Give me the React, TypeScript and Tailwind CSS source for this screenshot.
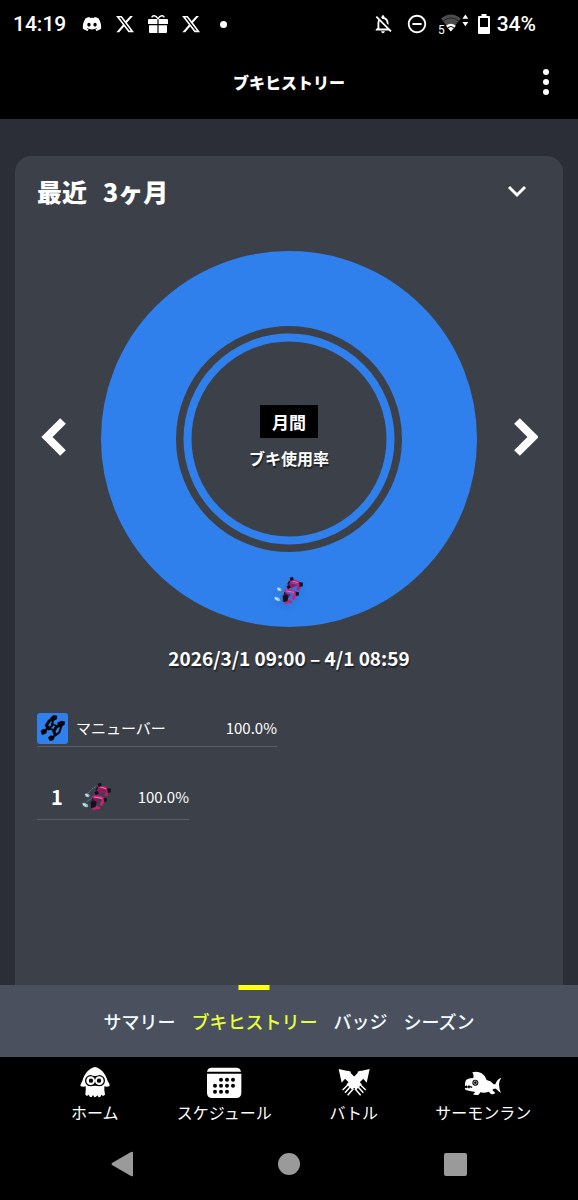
import type { ReactNode } from 'react';
import { FaDiscord, FaXTwitter } from 'react-icons/fa6';
import { MdOutlineNotificationsOff, MdRemoveCircleOutline } from 'react-icons/md';

function GiftIcon() {
  return (
    <svg viewBox="0 0 20 18" className="h-[18px] w-5" fill="currentColor" aria-hidden="true">
      <path d="M1 4h8.400v5H0V5a1 1 0 0 1 1-1zM10.600 4H19a1 1 0 0 1 1 1v4h-9.400zM1 10.200h8.400V18H2a1 1 0 0 1-1-1zM10.600 10.200H19V17a1 1 0 0 1-1 1h-7.400z" />
      <path d="M10 4C8 0 4 0 4 2.500M10 4c2-4 6-4 6-1.500" fill="none" stroke="currentColor" strokeWidth="1.500" />
    </svg>
  );
}

function WifiIcon() {
  return (
    <span className="flex items-end">
      <span className="-mr-1 text-xs leading-3 font-normal">5</span>
      <svg viewBox="0 0 82 60" className="mb-[3px] h-5 w-[27px] overflow-visible" aria-hidden="true">
        <path d="M0 16Q30-8 60 16L30 54Z" fill="#4b4b4b" />
        <path d="M7 24Q30 5 53 24" stroke="#222" strokeWidth="3" fill="none" />
        <path d="M15 38Q30 26 45 38L30 56Z" fill="#fff" />
        <path d="M21 44Q30 37 39 44" stroke="#000" strokeWidth="3" fill="none" />
        <path d="M65 17l9-13 9 13zM65 27l9 13 9-13z" fill="#fff" />
      </svg>
    </span>
  );
}

function BatteryIcon() {
  return (
    <svg viewBox="0 0 12 20" className="h-5 w-3" aria-hidden="true">
      <path d="M3.500 0h5v2H11a1 1 0 0 1 1 1v16a1 1 0 0 1-1 1H1a1 1 0 0 1-1-1V3a1 1 0 0 1 1-1h2.500zM2 4v9h8V4z" fill="#fff" fillRule="evenodd" />
    </svg>
  );
}

function DualiesSprite({ className }: { className: string }) {
  return (
    <svg viewBox="27 27 96 96" className={className} fill="none" aria-hidden="true">
      <path d="M45 70Q56 50 72 44M38 97Q46 84 62 79" stroke="#5b8fae" strokeWidth="3" strokeDasharray="5 3" />
      <path d="M38 66l7-2 8 5-2 7-9-1zM31 93l6-1 10 5 2 8-9 1-8-6z" fill="#8ec0ca" />
      <path d="M33 96l9 5M41 68l7 3" stroke="#e5fafa" strokeWidth="3" />
      <path d="M77 46Q93 43 108 54L101 72" stroke="#c3186f" strokeWidth="9" />
      <path d="M72 53L92 58 79 64" stroke="#9c1460" strokeWidth="7" />
      <path d="M82 44l20 6" stroke="#ff98bd" strokeWidth="2" />
      <path d="M62 76Q78 70 97 82L86 100" stroke="#d31c79" strokeWidth="9" />
      <path d="M62 84L79 88" stroke="#8b1456" strokeWidth="7" />
      <path d="M67 75l23 4" stroke="#ff9bc2" strokeWidth="2" />
      <path d="M62 112l13-6 8 4" stroke="#cf1f74" strokeWidth="8" />
      <path d="M77 35l10-3 2 10-9 3zM106 48l11 2-1 11-9 2zM67 61l9-5 5 8-9 6zM95 77l9 1 1 10-9 2zM56 89l10-4 8 6-4 15-13 2z" fill="#10111c" />
      <path d="M72 55l5-10M62 91V79" stroke="#29172a" strokeWidth="5" />
    </svg>
  );
}

function DualiesGlyph() {
  return (
    <svg viewBox="22 39 92 92" className="size-[31px] shrink-0" aria-hidden="true">
      <rect x="22" y="39" width="92" height="92" rx="9" fill="#2f80ed" />
      <g stroke="#05070b" strokeLinecap="round">
        <path d="M72 54L58 63 50 76 57 86" strokeWidth="9" fill="none" />
        <path d="M70 58L66 78 42 92" strokeWidth="6" fill="none" />
        <path d="M64 53l8-6 8 2-1 7-7 4-7-1zM35 93l6-5 9 4-3 7-9 3z" fill="#05070b" strokeWidth="4" />
        <path d="M94 74L80 80 72 93 76 103" strokeWidth="9" fill="none" />
        <path d="M95 76L88 97 66 112" strokeWidth="6" fill="none" />
        <path d="M85 69l9-5 9 2-1 7-8 5-8-1zM57 112l7-5 8 4-3 7-8 2z" fill="#05070b" strokeWidth="4" />
        <path d="M66 72l12 4M52 83l18 6" strokeWidth="5" fill="none" />
      </g>
    </svg>
  );
}

function SquidIcon() {
  return (
    <svg viewBox="88 33 96 96" className="size-8" aria-hidden="true">
      <path d="M136 36C152 39 167 53 174 78Q180 86 180 93Q172 97 164 94Q163 107 166 119L160 123 155 119 152 126 147 127 143 121 139 125 134 127 130 120 126 126 121 126 117 119 112 123 107 119Q109 107 108 94Q99 97 92 93Q93 86 98 78C105 53 120 39 136 36Z" fill="#fff" />
      <path d="M123 60Q136 66 149 60A17 17 0 0 1 149 94Q136 90 123 94A17 17 0 0 1 123 60Z" fill="#000" />
      <circle cx="123" cy="77" r="13" fill="#fff" />
      <circle cx="149" cy="77" r="13" fill="#fff" />
      <circle cx="124" cy="77" r="6.500" fill="#000" />
      <circle cx="148" cy="77" r="6.500" fill="#000" />
    </svg>
  );
}

const CALENDAR_DOTS = [
  [516, 74], [534, 74], [552, 74],
  [498, 92], [516, 92], [534, 92], [552, 92],
  [498, 110], [516, 110], [534, 110],
];

function CalendarIcon() {
  return (
    <svg viewBox="471 33 108 96" className="h-8 w-9" aria-hidden="true">
      <path d="M474 50q2-12 14-12h74q12 0 14 12zM474 56h103v57q0 16-16 16h-71q-16 0-16-16z" fill="#fff" />
      {CALENDAR_DOTS.map(([x, y]) => (
        <circle key={`${x}-${y}`} cx={x} cy={y} r="6" fill="#000" />
      ))}
    </svg>
  );
}

function BattleIcon() {
  return (
    <svg viewBox="82 33 96 96" className="size-8" fill="#fff" stroke="#fff" aria-hidden="true">
      <path d="M84 42L121 50 117 58 100 75 93 83ZM177 42L140 50 144 58 161 75 168 83Z" stroke="none" />
      <path d="M104 55L145 96M157 55L116 96" strokeWidth="24" />
      <path d="M112 89L96 105M119 95L103 113M128 101L111 121M149 89L165 105M142 95L158 113M133 101L150 121" strokeWidth="4.500" />
    </svg>
  );
}

function SalmonIcon() {
  return (
    <svg viewBox="462 33 114 96" className="h-8 w-[38px]" aria-hidden="true">
      <path d="M490 69Q493 61 487 52Q503 47 515 55Q526 62 530 75Q544 78 551 88L556 88Q560 73 574 68Q567 78 567 88Q567 101 573 114Q564 108 558 101L551 101 547 105 556 114Q550 119 543 117L536 110Q524 115 511 112L506 119Q497 122 489 118L496 111Q478 108 467 105L464 98 470 100 473 97 477 101 480 97 486 99 487 95 476 91 472 95 470 91 465 94Q464 84 467 77Q472 69 490 69Z" fill="#fff" />
      <circle cx="496" cy="83" r="9" fill="#000" />
      <circle cx="496" cy="83" r="5" fill="none" stroke="#fff" strokeWidth="2" />
    </svg>
  );
}

function ArrowButton({ label, d }: { label: string; d: string }) {
  return (
    <button type="button" aria-label={label} className="mb-1 flex h-12 w-8 items-center justify-center">
      <svg viewBox="0 0 26 38" className="h-[38px] w-[26px]" fill="none" stroke="#fff" strokeWidth="8" aria-hidden="true">
        <path d={d} />
      </svg>
    </button>
  );
}

function StatusBar() {
  return (
    <div className="flex h-12 items-center justify-between pr-[42px] pl-[13px] font-['Roboto',sans-serif] text-[21px] leading-none font-medium">
      <div className="flex items-center">
        <span>14:19</span>
        <div className="ml-4 flex items-center gap-[13px]">
          <FaDiscord className="size-5" />
          <FaXTwitter className="size-5" />
          <GiftIcon />
          <FaXTwitter className="size-5" />
        </div>
        <span className="ml-[19px] size-[7px] rounded-full bg-white" />
      </div>
      <div className="flex items-center">
        <MdOutlineNotificationsOff className="size-[22px]" />
        <MdRemoveCircleOutline className="ml-3 size-[22px]" />
        <span className="ml-[10px]"><WifiIcon /></span>
        <span className="mr-[7px] ml-[10px]"><BatteryIcon /></span>
        <span>34%</span>
      </div>
    </div>
  );
}

function UsageChart() {
  return (
    <div className="grid min-w-0 flex-1 max-w-[376px] place-items-center">
      <svg viewBox="0 0 376 376" className="col-start-1 row-start-1 w-full" fill="none" stroke="#2f80ed" aria-hidden="true">
        <circle cx="188" cy="188" r="150.500" strokeWidth="75" />
        <circle cx="188" cy="188" r="101.500" strokeWidth="8" />
      </svg>
      <div className="col-start-1 row-start-1 flex flex-col items-center gap-2 pb-1 font-bold [text-shadow:1px_2px_1px_rgba(0,0,0,0.5)]">
        <span className="bg-black px-3 py-1 text-[17px] leading-[25px]">月間</span>
        <span className="text-base leading-6">ブキ使用率</span>
      </div>
      <div className="col-start-1 row-start-1 self-end pb-5">
        <DualiesSprite className="size-8 drop-shadow-md" />
      </div>
    </div>
  );
}

const TABS = ['サマリー', 'ブキヒストリー', 'バッジ', 'シーズン'];

const NAV_ITEMS: { label: string; icon: ReactNode }[] = [
  { label: 'ホーム', icon: <SquidIcon /> },
  { label: 'スケジュール', icon: <CalendarIcon /> },
  { label: 'バトル', icon: <BattleIcon /> },
  { label: 'サーモンラン', icon: <SalmonIcon /> },
];

export default function App() {
  return (
    <div className="flex min-h-screen flex-col bg-[#2b2e36] font-['Noto_Sans_CJK_JP',sans-serif] text-white">
      <header className="bg-black">
        <StatusBar />
        <div className="grid h-[71px] grid-cols-[1fr_auto_1fr] items-center px-5 pb-1">
          <h1 className="col-start-2 text-base font-black">ブキヒストリー</h1>
          <button type="button" aria-label="メニュー" className="flex w-6 flex-col items-center gap-1 justify-self-end">
            <span className="size-[6px] rounded-full bg-white" />
            <span className="size-[6px] rounded-full bg-white" />
            <span className="size-[6px] rounded-full bg-white" />
          </button>
        </div>
      </header>

      <main className="flex flex-1 flex-col px-[15px] pt-[37px]">
        <section className="flex-1 rounded-t-2xl bg-[#3c4149] px-[22px]">
          <div className="flex h-[72px] items-center justify-between pr-[10px]">
            <h2 className="flex gap-4 text-[25px] font-black">
              <span>最近</span>
              <span>3ヶ月</span>
            </h2>
            <button type="button" aria-label="期間を選ぶ" className="p-1">
              <svg viewBox="0 0 20 14" className="h-[14px] w-5" fill="none" stroke="#fff" strokeWidth="3" aria-hidden="true">
                <path d="M2 2l8 8 8-8" />
              </svg>
            </button>
          </div>

          <div className="mt-[23px] flex items-center justify-between">
            <ArrowButton label="前へ" d="M23 3L7 19l16 16" />
            <UsageChart />
            <ArrowButton label="次へ" d="M5 3l16 16L5 35" />
          </div>
          <p className="mt-4 text-center text-[19px] leading-[30px] font-bold [text-shadow:1px_2px_1px_rgba(0,0,0,0.5)]">
            2026/3/1 09:00 – 4/1 08:59
          </p>

          <div className="mt-10 flex w-60 items-center border-b border-[#585d66] pb-[2px] text-[15px]">
            <DualiesGlyph />
            <span className="ml-2 flex-1">マニューバー</span>
            <span>100.0%</span>
          </div>
          <div className="mt-7 flex h-[45px] w-38 items-center border-b border-[#585d66] text-[15px]">
            <span className="w-10 text-center text-xl font-bold">1</span>
            <DualiesSprite className="ml-1 size-8" />
            <span className="ml-auto">100.0%</span>
          </div>
        </section>
      </main>

      <nav aria-label="記録" className="flex h-[72px] justify-center gap-4 bg-[#4a505d] text-lg font-medium">
        {TABS.map((tab) => {
          const active = tab === 'ブキヒストリー';
          return (
            <a
              key={tab}
              href="#"
              aria-current={active ? 'page' : undefined}
              className={active ? 'relative flex items-center text-[#e6ff3c]' : 'flex items-center text-[#f1fbff]'}
            >
              {active && <span className="absolute top-0 left-1/2 h-[5px] w-[31px] -translate-x-1/2 bg-[#ffff14]" />}
              {tab}
            </a>
          );
        })}
      </nav>

      <footer className="bg-black">
        <nav aria-label="メイン" className="grid grid-cols-4 px-[30px] pt-[9px]">
          {NAV_ITEMS.map(({ label, icon }) => (
            <a key={label} href="#" className="flex flex-col items-center gap-[2px] text-base leading-6 whitespace-nowrap">
              {icon}
              {label}
            </a>
          ))}
        </nav>
        <div className="grid h-19 grid-cols-3 px-[39px] pt-1 text-[#9a9a9a]">
          <button type="button" aria-label="戻る" className="flex items-center justify-center">
            <svg viewBox="0 0 22 26" className="h-[26px] w-[22px]" fill="currentColor" aria-hidden="true">
              <path d="M20 1q2-1 2 1v22q0 2-2 1L1 14q-1-1 0-2z" />
            </svg>
          </button>
          <button type="button" aria-label="ホーム画面" className="flex items-center justify-center">
            <span className="size-[22px] rounded-full bg-[#9a9a9a]" />
          </button>
          <button type="button" aria-label="アプリ履歴" className="flex items-center justify-center">
            <span className="size-[23px] rounded-[2px] bg-[#9a9a9a]" />
          </button>
        </div>
      </footer>
    </div>
  );
}
